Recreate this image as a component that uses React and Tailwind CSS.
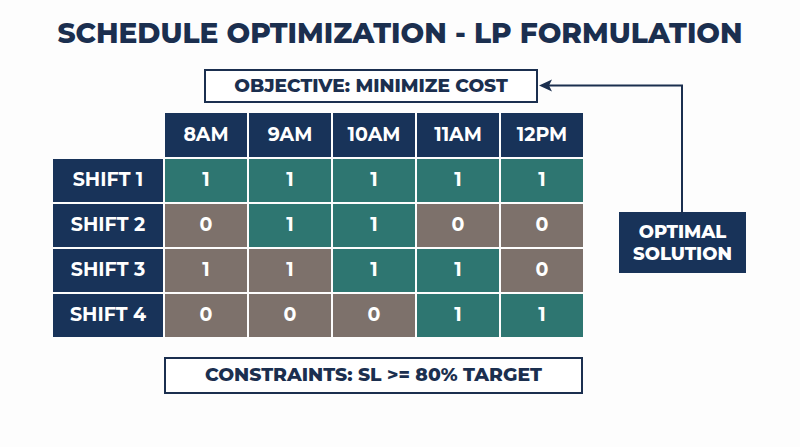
import React from "react";

const times = ["8AM", "9AM", "10AM", "11AM", "12PM"];

// value + whether the cell is highlighted (teal) or not (taupe)
const shifts = [
  { name: "SHIFT 1", cells: [[1, 1], [1, 1], [1, 1], [1, 1], [1, 1]] },
  { name: "SHIFT 2", cells: [[0, 0], [1, 1], [1, 1], [0, 0], [0, 0]] },
  { name: "SHIFT 3", cells: [[1, 0], [1, 0], [1, 1], [1, 1], [0, 0]] },
  { name: "SHIFT 4", cells: [[0, 0], [0, 0], [0, 0], [1, 1], [1, 1]] },
];

const Connector = () => (
  <svg
    className="absolute left-0 top-0 pointer-events-none"
    width="800"
    height="447"
    viewBox="0 0 800 447"
  >
    <path d="M682 213 V85.5 H548" fill="none" stroke="#1b2f4f" strokeWidth="2" />
    <path d="M539 85.5 L552 79.5 L549 85.5 L552 91.5 Z" fill="#1b2f4f" />
  </svg>
);

const App = () => {
  return (
    <div className="relative w-[800px] h-[447px] overflow-hidden bg-[#fdfdfd] font-['Montserrat','Open_Sans',sans-serif] text-[#172b4d]">
      {/* Title */}
      <h1 className="pt-[14px] text-center text-[28px] leading-[38px] font-extrabold text-[#1b2f4f]">
        SCHEDULE OPTIMIZATION - LP FORMULATION
      </h1>

      {/* Objective */}
      <div className="ml-[204px] mt-[17px] flex h-[34px] w-[334px] items-center justify-center border-2 border-[#1b2f4f] bg-white text-[18.6px] font-extrabold text-[#1b2f4f]">
        OBJECTIVE: MINIMIZE COST
      </div>

      <div className="mt-[10px] flex">
        {/* Schedule table */}
        <div className="ml-[53px] grid grid-cols-[110px_repeat(5,82px)] gap-[2px]">
          <div />
          {times.map((t) => (
            <div
              key={t}
              className="flex h-[44px] items-center justify-center bg-[#183359] text-[19px] font-bold text-white"
            >
              {t}
            </div>
          ))}
          {shifts.map((s) => (
            <React.Fragment key={s.name}>
              <div className="flex h-[43px] items-center justify-center bg-[#183359] text-[19px] font-bold text-white">
                {s.name}
              </div>
              {s.cells.map(([v, on], i) => (
                <div
                  key={i}
                  className={
                    on
                      ? "flex h-[43px] items-center justify-center bg-[#2e7671] text-[19px] font-bold text-white"
                      : "flex h-[43px] items-center justify-center bg-[#7d716b] text-[19px] font-bold text-white"
                  }
                >
                  {v}
                </div>
              ))}
            </React.Fragment>
          ))}
        </div>

        {/* Optimal solution */}
        <div className="ml-[36px] mt-[99px] flex h-[61px] w-[127px] flex-col items-center justify-center bg-[#183359] text-[18px] font-extrabold leading-[22px] text-white">
          <span>OPTIMAL</span>
          <span>SOLUTION</span>
        </div>
      </div>

      {/* Constraints */}
      <div className="ml-[164px] mt-[20px] flex h-[37px] w-[419px] items-center justify-center border-2 border-[#1b2f4f] bg-white text-[18.8px] font-extrabold text-[#1b2f4f]">
        CONSTRAINTS: SL &gt;= 80% TARGET
      </div>

      <Connector />
    </div>
  );
};

export default App;
